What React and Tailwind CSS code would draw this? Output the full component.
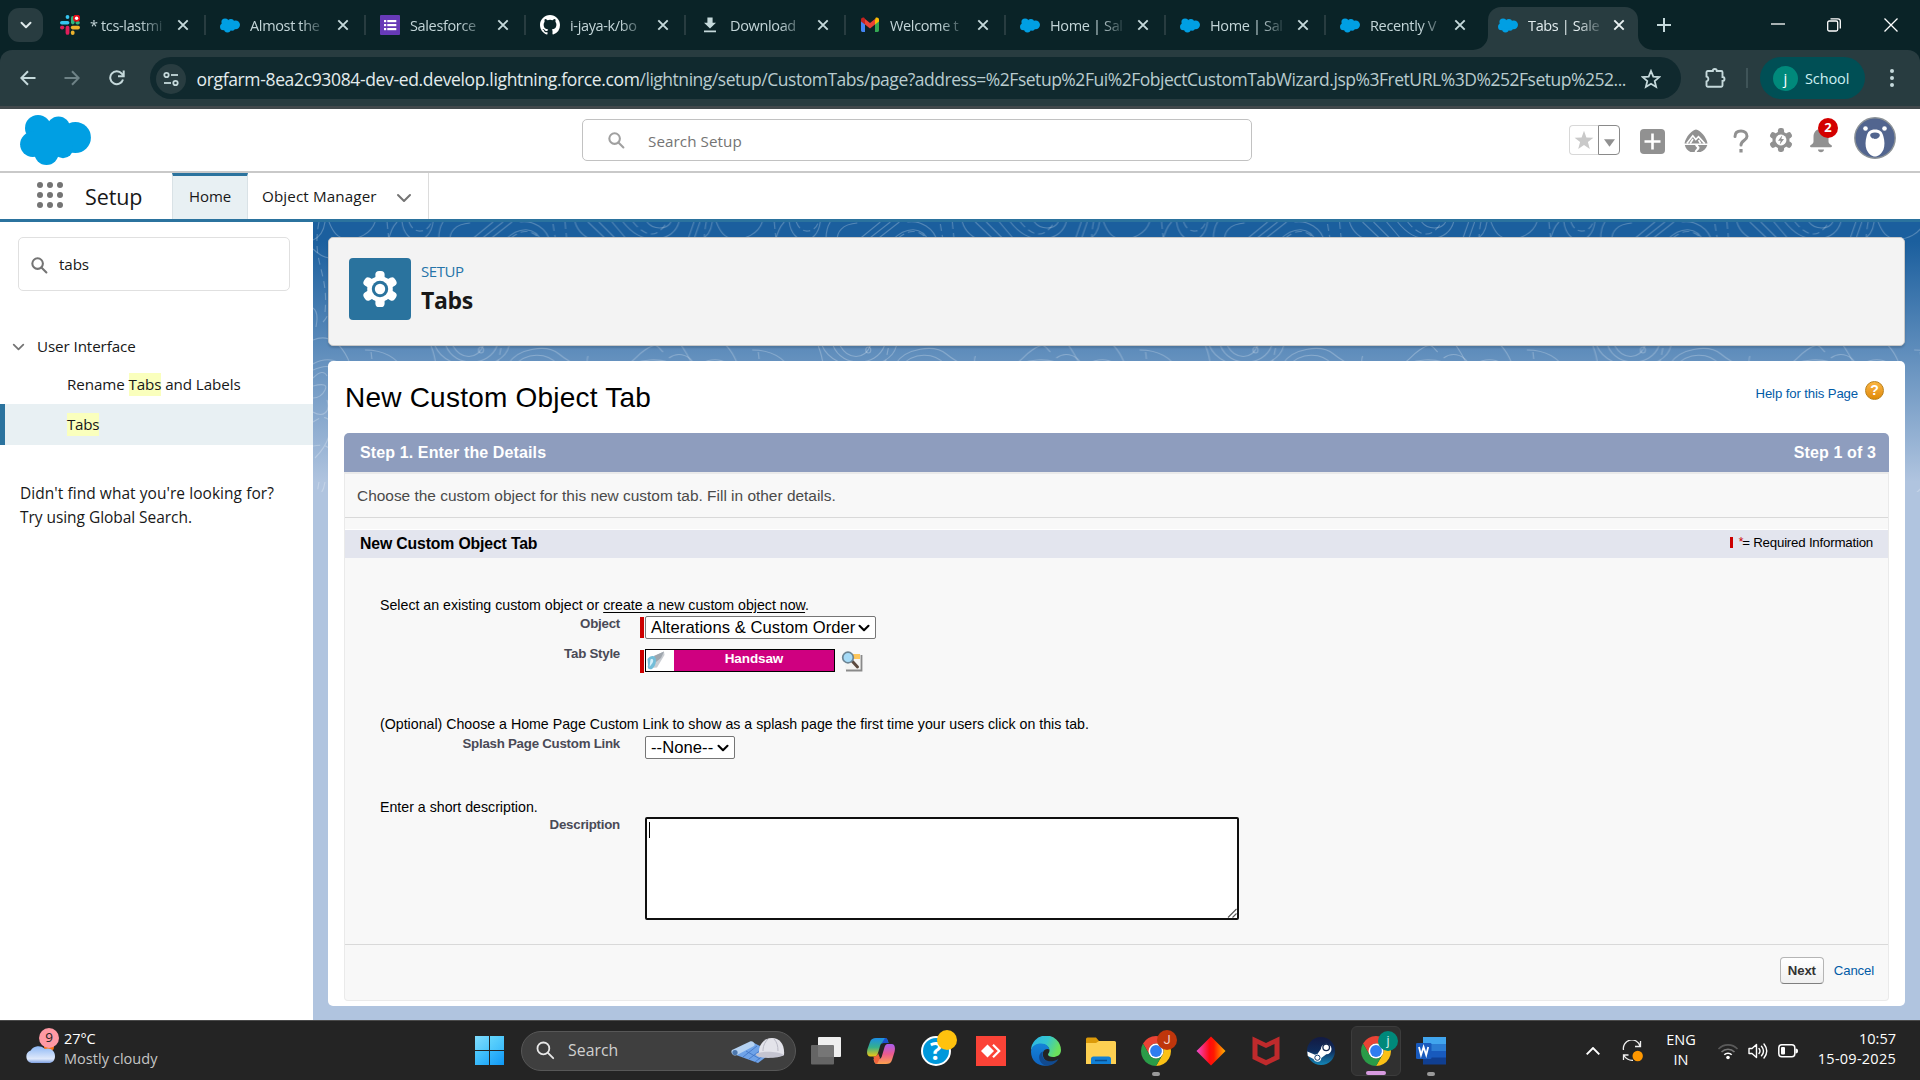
import React from "react";

const ui = "font-['Open_Sans','Noto_Sans',sans-serif]";
const arial = "font-['Liberation_Sans',Arial,sans-serif]";

/* ---------- Icons ---------- */

function Cloud({ className }) {
  return (
    <svg viewBox="20 115 71 50" className={className} fill="#009fe3">
      <circle cx="38" cy="128" r="13" />
      <circle cx="58.5" cy="128" r="11.5" />
      <circle cx="75.3" cy="137.5" r="15.6" />
      <circle cx="32.7" cy="144.3" r="12.6" />
      <circle cx="46.5" cy="152.8" r="12.2" />
      <circle cx="63" cy="148" r="10.2" />
      <rect x="34" y="128" width="34" height="22" />
    </svg>
  );
}

function Slack() {
  return (
    <svg viewBox="0 0 20 20" className="h-5 w-5">
      <rect x="5.6" y="0" width="3.8" height="4" rx="1.9" fill="#36c5f0" />
      <rect x="0" y="6" width="9.4" height="3.6" rx="1.8" fill="#36c5f0" />
      <rect x="11" y="1" width="3.6" height="8.4" rx="1.8" fill="#2eb67d" />
      <rect x="15.5" y="6" width="4.3" height="3.5" rx="1.7" fill="#2eb67d" />
      <rect x="10.8" y="10.8" width="9.2" height="3.6" rx="1.8" fill="#ecb22e" />
      <rect x="10.8" y="15.6" width="3.8" height="4.4" rx="1.9" fill="#ecb22e" />
      <rect x="0" y="10.8" width="4.3" height="3.6" rx="1.8" fill="#e01e5a" />
      <rect x="5.6" y="10.8" width="3.8" height="9" rx="1.9" fill="#e01e5a" />
      <circle cx="16.6" cy="3.2" r="3.6" fill="#e30b17" />
      <circle cx="16.6" cy="3.2" r="1.7" fill="#fff" />
    </svg>
  );
}

function Forms() {
  return (
    <svg viewBox="0 0 20 20" className="h-5 w-5">
      <rect width="20" height="20" rx="1" fill="#673ab7" />
      <g fill="#fff">
        <rect x="4" y="5" width="2.2" height="2.2" />
        <rect x="4" y="9" width="2.2" height="2.2" />
        <rect x="4" y="13" width="2.2" height="2.2" />
        <rect x="7.3" y="5" width="9" height="2.2" />
        <rect x="7.3" y="9" width="9" height="2.2" />
        <rect x="7.3" y="13" width="9" height="2.2" />
      </g>
    </svg>
  );
}

function Github() {
  return (
    <svg viewBox="0 0 16 16" className="h-5 w-5" fill="#fff">
      <path d="M8 0C3.58 0 0 3.58 0 8c0 3.54 2.29 6.53 5.47 7.59.4.07.55-.17.55-.38 0-.19-.01-.82-.01-1.49-2.01.37-2.53-.49-2.69-.94-.09-.23-.48-.94-.82-1.13-.28-.15-.68-.52-.01-.53.63-.01 1.08.58 1.23.82.72 1.21 1.87.87 2.33.66.07-.52.28-.87.51-1.07-1.78-.2-3.64-.89-3.64-3.95 0-.87.31-1.59.82-2.15-.08-.2-.36-1.02.08-2.12 0 0 .67-.21 2.2.82a7.6 7.6 0 0 1 4 0c1.53-1.04 2.2-.82 2.2-.82.44 1.1.16 1.92.08 2.12.51.56.82 1.27.82 2.15 0 3.07-1.87 3.75-3.65 3.95.29.25.54.73.54 1.48 0 1.07-.01 1.93-.01 2.2 0 .21.15.46.55.38A8.01 8.01 0 0 0 16 8c0-4.42-3.58-8-8-8z" />
    </svg>
  );
}

function DownloadGlyph() {
  return (
    <svg viewBox="0 0 20 20" className="h-5 w-5" fill="#c5d9db">
      <path d="M7.4 2.5h5.2v5.2h3.4L10 13.6 4 7.7h3.4zM4 15.4h12v1.9H4z" />
    </svg>
  );
}

function Gmail() {
  return (
    <svg viewBox="0 0 20 20" className="h-5 w-5">
      <path d="M1 4.5v11A1.5 1.5 0 0 0 2.4 17H5V8z" fill="#4285f4" />
      <path d="M19 4.5v11a1.5 1.5 0 0 1-1.4 1.5H15V8z" fill="#34a853" />
      <path d="M15 5v4.6l4-3V4.700c0-1.900-2.100-2.800-3.500-1.700z" fill="#fbbc04" />
      <path d="M5 9.6V4l5 3.900L15 4v5.600l-5 3.900z" fill="#ea4335" />
      <path d="M1 4.700v1.900l4 3V4l-.5-1C3.100 1.900 1 2.800 1 4.700z" fill="#c5221f" />
    </svg>
  );
}

function Close({ color }) {
  return (
    <svg viewBox="0 0 16 16" className="h-4 w-4 shrink-0" stroke={color} strokeWidth="1.9" fill="none">
      <path d="M3.3 3.3l9.400 9.400M12.700 3.300l-9.400 9.400" />
    </svg>
  );
}

function Magnifier({ className, color, w = 2.2 }) {
  return (
    <svg viewBox="0 0 18 18" className={className} fill="none" stroke={color} strokeWidth={w} strokeLinecap="round">
      <circle cx="7" cy="7" r="5.6" />
      <path d="M11.3 11.3L16.3 16.3" />
    </svg>
  );
}

function Gear({ className, color, hole, bolt }) {
  return (
    <svg viewBox="-18 -18 36 36" className={className} fill={color}>
      <circle r="12.8" />
      {[0, 60, 120, 180, 240, 300].map((a) => (
        <rect key={a} x="-4.6" y="-18" width="9.2" height="12" rx="3.6" transform={`rotate(${a})`} />
      ))}
      <circle r="8.2" fill={hole} />
      {bolt ? <path d="M2-7L-4.500 1H-.5L-2 7 4.500-1.500H.5z" /> : <circle r="5.2" />}
    </svg>
  );
}

function Chevron({ className, color, w = 2 }) {
  return (
    <svg viewBox="0 0 16 10" className={className} fill="none" stroke={color} strokeWidth={w} strokeLinecap="round" strokeLinejoin="round">
      <path d="M2 2l6 6 6-6" />
    </svg>
  );
}

function Chrome() {
  return (
    <svg viewBox="-15 -15 30 30" className="h-[30px] w-[30px]">
      <path d="M-12.990 -7.500A15 15 0 0 1 12.990 -7.500H0A7.500 7.500 0 0 0-6.500-3.750L-6.500 3.750z" fill="#ea4335" />
      <path d="M12.990-7.500A15 15 0 0 1 0 15L6.500 3.750A7.500 7.500 0 0 0 6.500-3.750L0-7.500z" fill="#fbc116" />
      <path d="M0 15A15 15 0 0 1-12.990-7.500L-6.500 3.750A7.500 7.500 0 0 0 6.500 3.750z" fill="#2a9c48" />
      <circle r="7.5" fill="#fff" />
      <circle r="5.9" fill="#2f7df0" />
    </svg>
  );
}

/* ---------- Browser ---------- */

const tabs = [
  { icon: <Slack />, title: "* tcs-lastmi" },
  { icon: <Cloud className="h-[15px] w-5" />, title: "Almost the" },
  { icon: <Forms />, title: "Salesforce" },
  { icon: <Github />, title: "i-jaya-k/bo" },
  { icon: <DownloadGlyph />, title: "Download" },
  { icon: <Gmail />, title: "Welcome t" },
  { icon: <Cloud className="h-[15px] w-5" />, title: "Home | Sal" },
  { icon: <Cloud className="h-[15px] w-5" />, title: "Home | Sal" },
  { icon: <Cloud className="h-[15px] w-5" />, title: "Recently V" },
];

const fade = "whitespace-nowrap pt-px text-[14.5px] tracking-[-0.35px] [mask-image:linear-gradient(to_right,black_68%,transparent_104%)]";

function TabStrip() {
  return (
    <div className="flex h-[50px] items-start bg-[#0a2327] pl-2">
      <div className="mt-2 mr-1 flex h-[34px] w-[35px] items-center justify-center rounded-[11px] bg-[#283c40]">
        <Chevron className="h-[8px] w-[12px]" color="#dfeaeb" w={2.6} />
      </div>
      {tabs.map((t, i) => (
        <div key={i} className={`flex h-[50px] shrink-0 items-center pl-[13px] ${i < 8 ? "w-[160px]" : "w-[146px]"}`}>
          <div className="flex w-5 shrink-0 justify-center">{t.icon}</div>
          <div className={`${fade} ml-[10px] w-[74px] shrink-0 text-[#c3d5d8]`}>{t.title}</div>
          <div className={i < 8 ? "ml-[11px]" : "ml-[8px]"}><Close color="#c5d9db" /></div>
          {i < 8 && <div className="ml-[13px] h-5 w-[2px] bg-[#283c40]" />}
        </div>
      ))}
      <div className="flex h-[50px] w-[180px] items-end">
        <svg viewBox="0 0 15 15" className="h-[15px] w-[15px] shrink-0"><path d="M0 15A15 15 0 0 0 15 0V15z" fill="#283c40" /></svg>
        <div className="flex h-[43px] w-[150px] shrink-0 items-center rounded-t-[13px] bg-[#283c40] pb-[7px] pl-[10px]">
          <Cloud className="h-[15px] w-5" />
          <div className={`${fade} ml-[10px] w-[74px] text-[#e2ecee]`}>Tabs | Sale</div>
          <div className="ml-[9px]"><Close color="#eaf2f3" /></div>
        </div>
        <svg viewBox="0 0 15 15" className="h-[15px] w-[15px] shrink-0"><path d="M15 15A15 15 0 0 1 0 0V15z" fill="#283c40" /></svg>
      </div>
      <svg viewBox="0 0 14 14" className="mt-[18px] ml-1 h-[14px] w-[14px]" stroke="#c5d9db" strokeWidth="2"><path d="M7 0v14M0 7h14" /></svg>
      <svg viewBox="0 0 14 14" className="mt-[17px] ml-[100px] h-[14px] w-[14px]" stroke="#fff" strokeWidth="1.3"><path d="M0 7h14" /></svg>
      <svg viewBox="0 0 14 14" className="mt-[18px] ml-[42px] h-[14px] w-[14px]" stroke="#fff" strokeWidth="1.3" fill="none">
        <rect x=".7" y="3" width="10" height="10" rx="1.5" />
        <path d="M3.500.8H11a2.300 2.300 0 0 1 2.300 2.300v7.500" />
      </svg>
      <svg viewBox="0 0 14 14" className="mt-[18px] ml-[43px] h-[14px] w-[14px]" stroke="#fff" strokeWidth="1.3"><path d="M.5.5l13 13M13.500.5L.5 13.500" /></svg>
    </div>
  );
}

function Toolbar() {
  return (
    <div className="bg-[#0a2327]">
      <div className="flex h-[59px] items-center rounded-t-[12px] border-b-[3px] border-[#42494c] bg-[#283c40]">
        <svg viewBox="0 0 16 16" className="ml-5 h-4 w-4" fill="none" stroke="#c5d9db" strokeWidth="2"><path d="M15.500 8H1.500M8 1.200L1.300 8 8 14.800" /></svg>
        <svg viewBox="0 0 16 16" className="ml-7 h-4 w-4" fill="none" stroke="#6e8286" strokeWidth="2"><path d="M.5 8h14M8 1.200L14.700 8 8 14.800" /></svg>
        <svg viewBox="0 0 16 16" className="ml-[29px] h-4 w-4" fill="none" stroke="#c5d9db" strokeWidth="2">
          <path d="M14 9.500A6.500 6.500 0 1 1 12.800 3.600L14.500 5.800" /><path d="M14.700.5v5.800H9" />
        </svg>
        <div className="ml-[25px] flex h-[42px] w-[1531px] items-center rounded-full bg-[#10292e] pt-px pl-[6px]">
          <div className="flex h-[30px] w-[30px] shrink-0 items-center justify-center rounded-full bg-[#283c40]">
            <svg viewBox="0 0 16 16" className="h-4 w-4" fill="none" stroke="#c5d9db" strokeWidth="1.8">
              <circle cx="3.5" cy="4" r="2.2" /><path d="M8 4h7" /><circle cx="12.5" cy="12" r="2.2" /><path d="M1 12h7" />
            </svg>
          </div>
          <div className="ml-[10.5px] w-[1430px] shrink-0 pt-[2px] text-[17.5px] tracking-[-0.475px] whitespace-nowrap text-[#b9cccf]">
            <span className="tracking-[-0.35px] text-[#e3eced]">orgfarm-8ea2c93084-dev-ed.develop.lightning.force.com</span>
            /lightning/setup/CustomTabs/page?address=%2Fsetup%2Fui%2FobjectCustomTabWizard.jsp%3FretURL%3D%252Fsetup%252...
          </div>
          <svg viewBox="0 0 20 20" className="ml-[14.500px] h-5 w-5 shrink-0" fill="none" stroke="#c5d9db" strokeWidth="1.8"><path d="M10 2l2.300 5.600 6 .5-4.600 3.900 1.400 5.900L10 14.700l-5.100 3.200 1.400-5.900L1.700 8.100l6-.5z" /></svg>
        </div>
        <svg viewBox="0 0 22 22" className="ml-[23px] h-[22px] w-[22px]" fill="none" stroke="#c5d9db" strokeWidth="1.9">
          <path d="M2.500 5.200a1.200 1.200 0 0 1 1.200-1.200H8.800a2 2 0 0 1 4 0h4.500a1.200 1.200 0 0 1 1.200 1.200v4.800a2 2 0 0 1 0 4v4.500a1.200 1.200 0 0 1-1.200 1.200H3.700a1.200 1.200 0 0 1-1.200-1.200v-4a2.600 2.600 0 0 0 0-5z" />
        </svg>
        <div className="ml-5 h-5 w-[2px] bg-[#3f5458]" />
        <div className="ml-3 flex h-[42px] w-[105px] items-center rounded-full bg-[#004f55] pl-[13px]">
          <div className="flex h-[25px] w-[25px] items-center justify-center rounded-full bg-[#00897b] text-[15px] text-white">j</div>
          <span className="ml-[7px] pt-[2px] text-[14.5px] tracking-[-0.1px] text-[#cdeff2]">School</span>
        </div>
        <div className="ml-[25px] flex flex-col gap-[3px]">
          <div className="h-1 w-1 rounded-full bg-[#c5d9db]" />
          <div className="h-1 w-1 rounded-full bg-[#c5d9db]" />
          <div className="h-1 w-1 rounded-full bg-[#c5d9db]" />
        </div>
      </div>
    </div>
  );
}

/* ---------- Salesforce header ---------- */

function GlobalHeader() {
  return (
    <div className="flex h-16 items-start border-b-2 border-[#c9c9c9] bg-white">
      <Cloud className="mt-[6px] ml-5 h-[50px] w-[71px]" />
      <div className="mt-[10px] ml-[491px] flex h-[42px] w-[670px] items-center rounded-[5px] border border-[#c2c2c2] pl-[25px]">
        <Magnifier className="h-[17px] w-[17px]" color="#a0a0a0" />
        <span className="ml-[23px] pt-[2px] text-[15.2px] tracking-[0.08px] text-[#747474]">Search Setup</span>
      </div>
      <div className="mt-4 ml-[317px] flex h-[30px] w-[51px]">
        <div className="flex w-[29px] items-center justify-center rounded-l-[4px] border border-r-0 border-[#d8d8d8]">
          <svg viewBox="0 0 20 20" className="h-5 w-5" fill="#c9c9c9"><path d="M10 .8l2.400 6.600 7 .3-5.500 4.400 1.900 6.800L10 15l-5.800 3.900 1.900-6.800L.6 7.700l7-.3z" /></svg>
        </div>
        <div className="flex w-[22px] items-center justify-center rounded-r-[4px] border border-[#8a8a8a]">
          <svg viewBox="0 0 12 8" className="mt-[6px] h-2 w-[11px]" fill="#909090"><path d="M0 0h12L6 8z" /></svg>
        </div>
      </div>
      <svg viewBox="0 0 25 25" className="mt-5 ml-5 h-[25px] w-[25px]">
        <rect width="25" height="25" rx="4" fill="#919191" /><path d="M12.500 4.500v16M4.500 12.500h16" stroke="#fff" strokeWidth="2.600" />
      </svg>
      <svg viewBox="0 0 24 24" className="mt-5 ml-[19px] h-6 w-6">
        <path d="M12 0.500C16 1 22.500 8 23.500 14.500H.5C1.500 8 8 1 12 .5z" fill="#919191" />
        <path d="M.8 16h10.400c.3 2.200 2.500 2 1.600 3.400-.7 1-2 1.600-2.100 3.600H6.500C3.500 21.500 1.500 19.500.8 16zM14 16h9.300c-1 3.800-3.800 6-6.800 7h-3.800c.2-1.500 3-2.500 2.800-4.500-.1-1.200-1.400-1.400-1.500-2.500z" fill="#919191" />
        <path d="M2.800 14.600L8.800 6.800l3 3.800 2.700-3L20.800 14.600M9 10l-2.800 4.500M14.600 11l2 3.500" stroke="#fff" strokeWidth="1.6" fill="none" />
      </svg>
      <svg viewBox="0 0 16 24" className="mt-5 ml-[25px] h-6 w-4" fill="none" stroke="#919191" strokeWidth="3">
        <path d="M2 7.500C2 3.500 4.500 2 8 2s6 2 6 5.200c0 4.300-6 4.300-6 8.800" strokeLinecap="round" /><path d="M8 20v3.500" strokeWidth="3.2" />
      </svg>
      <Gear className="mt-[19px] ml-5 h-6 w-6" color="#919191" hole="#fff" bolt />
      <div className="relative mt-5 ml-4 h-6 w-6">
        <svg viewBox="0 0 24 24" className="h-6 w-6" fill="#919191">
          <path d="M12 0c5 0 7.500 3.500 7.500 8v4.500c0 2 1.500 2.500 3 3.700.8.700.5 2-.6 2H2.100c-1.100 0-1.400-1.300-.6-2 1.500-1.200 3-1.700 3-3.700V8C4.500 3.500 7 0 12 0zM9 20.500h6c0 3.500-6 3.500-6 0z" />
        </svg>
        <div className="absolute top-[-11px] left-[9px] flex h-5 w-5 items-center justify-center rounded-full bg-[#d30000] text-[13px] font-bold text-white">2</div>
      </div>
      <svg viewBox="0 0 42 42" className="mt-2 ml-[21px] h-[42px] w-[42px]">
        <circle cx="21" cy="21" r="20.2" fill="#52658f" stroke="#8c9297" strokeWidth="1.4" />
        <circle cx="11.5" cy="11.5" r="2.3" fill="#fff" /><circle cx="30.500" cy="11.5" r="2.3" fill="#fff" />
        <path d="M21 12.500c5 0 7.300 2.200 8.300 6.500 1.500 5 1.500 10 .2 13.500C27.500 37 24 39.500 21 39.500s-6.500-2.500-8.500-7c-1.300-3.500-1.300-8.500.2-13.500 1-4.300 3.300-6.500 8.300-6.500z" fill="#fff" />
        <path d="M21 15.500c3 0 4.800 1 4.800 2.800S23.500 22 21 22s-4.800-1.900-4.800-3.700 1.800-2.800 4.800-2.800z" fill="#52658f" />
      </svg>
    </div>
  );
}

function NavBar() {
  return (
    <div className="flex h-[49px] border-b-[3px] border-[#2b739e] bg-white pl-[37px]">
      <div className="mt-[9px] grid h-[26px] w-[26px] grid-cols-3 gap-x-[4px] gap-y-[4px]">
        {Array.from({ length: 9 }).map((_, i) => (
          <div key={i} className="h-[6px] w-[6px] rounded-full bg-[#747474]" />
        ))}
      </div>
      <div className="flex w-[109px] items-center pt-[2px] pl-[22px] text-[21.500px] tracking-[-0.1px] text-[#181818]">Setup</div>
      <div className="flex w-[76px] items-center justify-center border-x border-t-[3px] border-x-[#d9e2e6] border-t-[#2b739e] bg-[#e8f0f3] pb-[2px] text-[15px] tracking-[-0.1px] text-[#181818]">Home</div>
      <div className="flex w-[181px] items-center border-r border-[#dcdcdc] pl-[14px] text-[15.2px] text-[#181818]">
        <span className="w-[134px] pt-px tracking-[0.12px] whitespace-nowrap">Object Manager</span>
        <Chevron className="mt-1 h-[10px] w-[16px]" color="#747474" w={2} />
      </div>
    </div>
  );
}

/* ---------- Sidebar ---------- */

function Sidebar() {
  return (
    <div className="flex w-[313px] shrink-0 flex-col bg-white text-[15.2px] tracking-[-0.1px] text-[#181818]">
      <div className="mt-[15px] ml-[18px] flex h-[54px] w-[272px] items-center rounded-[5px] border border-[#e0e0e0] pt-px pl-3">
        <Magnifier className="mt-[2px] h-[17px] w-[17px]" color="#747474" />
        <span className="ml-[11px]">tabs</span>
      </div>
      <div className="mt-[39px] flex h-8 items-center pl-3">
        <Chevron className="mt-[2px] h-[8px] w-[13px]" color="#747474" w={2.2} />
        <span className="ml-3">User Interface</span>
      </div>
      <div className="mt-[2px] flex h-10 items-center pt-px pl-[67px] whitespace-pre">
        Rename <span className="bg-[#faffbd]">Tabs</span> and Labels
      </div>
      <div className="mt-[0px] flex h-[41px] items-center border-l-[5px] border-[#2b739e] bg-[#e8f0f3] pl-[62px]">
        <span className="bg-[#faffbd] tracking-[-0.3px]">Tabs</span>
      </div>
      <div className="mt-9 ml-5 text-[15.5px] leading-6 whitespace-nowrap">
        <p className="tracking-[0.05px]">Didn't find what you're looking for?</p>
        <p className="tracking-[-0.05px]">Try using Global Search.</p>
      </div>
    </div>
  );
}

/* ---------- Contour background ---------- */

function Contours() {
  return (
    <svg className="absolute inset-0 h-[270px] w-full" fill="none">
      <defs>
        <pattern id="contours" width="387.3" height="260" patternUnits="userSpaceOnUse">
          <g stroke="#fff" strokeOpacity=".25" strokeWidth="1.1" fill="none">
            <path d="M0 18Q10 14 12 0M16 0C20 10 24 16 34 17S58 12 62 0M84 0C80 4 77 10 75 20M89 0C92 24 117 24 120 0M130 0Q125 8 126 20M157 1C142 2 136 10 137 20M158 18L180 0M167 18L190 0M176 18L199 0M192 18C206 4 222 4 229 20M207 0C220 -2 234 6 237 20M262 0Q266 14 284 20M275 0L296 20M286 0L306 20M299 0L316 20M310 0C318 10 328 18 345 17Q362 14 366 0M374 20L381 0M380 20L387 0M334 0C340 8 354 8 358 0" />
            <path strokeDasharray="7 4" d="M74 0L76 20M96 0Q100 10 108 9T118 0M240 2L243 20M252 0L254 20M198 16Q212 4 224 14M320 0Q340 24 354 0" />
            <path d="M0 27Q8 35 16 36M0 86Q6 90 3 105M0 118C14 112 30 118 40 150M52 128Q80 128 92 150M122 124C134 152 190 150 196 124M133 124C142 146 176 145 184 124M140 124C148 138 164 138 170 124M88 142C84 150 84 158 86 164M118 124C128 148 118 158 136 164M195 142C205 126 234 122 246 132S262 140 268 150M201 144C213 130 234 130 244 142S256 152 262 150M275 134C270 150 290 156 306 148S320 136 332 128 344 124 350 130M310 148C322 136 352 134 366 146M356 136C364 130 374 132 380 140S386 148 387.300 142M0 142C14 134 30 138 34 150" />
            <ellipse cx="168" cy="128" rx="2.5" ry="3" />
            <path d="M0 148Q22 138 24 156M0 156Q10 146 14 154M0 190C10 196 18 190 14 178M0 164Q16 160 12 168T0 176M2 236Q12 226 16 214" />
            <path strokeDasharray="7 5" d="M6 0C-2 40 16 50 12 90M10 100Q20 90 16 70M58 130L60 146M188 126L184 146M0 200Q14 190 18 202M0 224Q20 220 18 236" />
            <path d="M374 40Q380 36 387 30M368 58C372 46 384 44 387 46M372 64C384 58 387 74 376 82M366 100Q376 108 387 100M366 120C376 134 384 150 386 164S376 190 370 196M374 190C392 180 390 208 370 212" />
          </g>
        </pattern>
      </defs>
      <rect width="100%" height="270" fill="url(#contours)" />
    </svg>
  );
}

/* ---------- Setup content ---------- */

function PageHeader() {
  return (
    <div className="relative flex h-[109px] rounded-[5px] border border-[#c9c9c9] bg-[#f3f3f3] pt-5 pl-5 shadow-[0_2px_2px_rgba(0,0,0,0.15)]">
      <div className="flex h-[62px] w-[62px] items-center justify-center rounded-[4px] bg-[#2a739e]">
        <Gear className="h-9 w-9" color="#fff" hole="#2a739e" />
      </div>
      <div className="ml-[10px]">
        <div className="mt-[3px] h-5 text-[15px] leading-5 tracking-[-0.45px] text-[#2574a9]">SETUP</div>
        <div className="mt-[4px] text-[23px] leading-[30px] font-bold tracking-[-0.35px] text-[#181818]">Tabs</div>
      </div>
    </div>
  );
}

function Select({ children, className }) {
  return (
    <div className={`flex h-[23px] items-center rounded-[2px] border border-[#767676] bg-white pl-[5px] text-[16.6px] text-black ${className}`}>
      <span className="grow pt-px tracking-[0.06px] whitespace-nowrap">{children}</span>
      <Chevron className="mr-[5px] h-[8px] w-[12px]" color="#000" w={2.8} />
    </div>
  );
}

const label = "w-[240px] text-right text-[13.3px] font-bold leading-[16px] tracking-[-0.25px] text-[#4a4a56]";

function WizardBody() {
  return (
    <div className="flex h-[529px] flex-col rounded-b-[4px] border border-t-2 border-[#eaeaea] bg-[#f8f8f8] text-[14.2px] text-black">
      <div className="flex h-11 shrink-0 items-center border-b border-[#d9d9d9] pl-3 text-[15.45px] text-[#4a4a4a]">Choose the custom object for this new custom tab. Fill in other details.</div>
      <div className="mt-[11px] flex h-[29px] shrink-0 items-center justify-between border-t border-white bg-[#e3e5ee] pr-[15px] pb-px pl-[15px]">
        <span className="text-[15.8px] font-bold tracking-[-0.15px]">New Custom Object Tab</span>
        <span className="flex items-center pb-[2px] text-[13.3px] tracking-[-0.22px]">
          <span className="mr-[6px] h-[11px] w-[3px] bg-[#c00]" />
          <span className="mr-[-1px] pb-px text-[12px] text-[#c00]">*</span>= Required Information
        </span>
      </div>
      <div className="flex flex-col pl-[35px]">
        <p className="mt-[38px] h-[18px] leading-[18px]">Select an existing custom object or <span className="underline underline-offset-2">create a new custom object now</span>.</p>
        <div className="mt-[2px] flex">
          <div className={label}>Object</div>
          <div className="mt-[1px] ml-5 h-[21px] w-1 bg-[#c00]" />
          <Select className="ml-[1px] w-[231px]">Alterations &amp; Custom Order</Select>
        </div>
        <div className="mt-[7px] flex">
          <div className={label}>Tab Style</div>
          <div className="mt-[4px] ml-5 h-[23px] w-1 bg-[#c00]" />
          <div className="mt-[3px] ml-[1px] flex h-[23px] w-[190px] border border-black">
            <div className="w-[28px] bg-white">
              <svg viewBox="0 0 28 21" className="h-[21px] w-[28px]">
                <path d="M8 6L18 1.500 18.500 5 11 17.500 5 18z" fill="#c9cdd2" />
                <path d="M8 6L18 1.500 15 8 10 12z" fill="#9fa6ad" />
                <path d="M1.500 9C4 5.500 8 5 9.500 8S9 17 6 19C3 20 1 18.500 2 15z" fill="#73bdd8" />
                <path d="M4.500 9.500C7 8 8 10 6.500 13l-3 4z" fill="#d5f0fa" />
              </svg>
            </div>
            <div className="grow bg-[#cf0080] text-center text-[13.5px] leading-[17px] font-bold tracking-[-0.1px] text-white">Handsaw</div>
          </div>
          <svg viewBox="0 0 22 22" className="mt-[5px] ml-[6px] h-[22px] w-[22px]">
            <path d="M7 3h13v16H4v-8z" fill="#f4f4f2" /><path d="M5 19.500h15.500V4" stroke="#8a8a8a" strokeWidth="1.8" fill="none" />
            <rect x="11" y="3" width="8" height="5" fill="#fcc65c" />
            <path d="M11.500 10.500l5 5.500" stroke="#5b4a3f" strokeWidth="3" strokeLinecap="round" />
            <circle cx="7" cy="6.5" r="5.3" fill="#a6dbf7" stroke="#6c8493" strokeWidth="1.7" />
          </svg>
        </div>
        <p className="mt-[42px] h-[18px] leading-[18px]">(Optional) Choose a Home Page Custom Link to show as a splash page the first time your users click on this tab.</p>
        <div className="mt-[3px] flex">
          <div className={label}>Splash Page Custom Link</div>
          <Select className="ml-[25px] w-[90px]">--None--</Select>
        </div>
        <p className="mt-[39px] h-[18px] leading-[18px]">Enter a short description.</p>
        <div className="mt-[1px] flex">
          <div className={label}>Description</div>
          <div className="ml-[25px] flex h-[103px] w-[594px] items-end justify-between rounded-[2px] border-2 border-[#101010] bg-white">
            <div className="mb-[80px] ml-[2px] h-4 w-px bg-black" />
            <svg viewBox="0 0 10 10" className="h-[10px] w-[10px]" stroke="#555" strokeWidth="1.1"><path d="M1 9.500L9.500 1M5.500 9.500L9.500 5.500" /></svg>
          </div>
        </div>
      </div>
      <div className="mt-6 flex grow items-start justify-end border-t border-[#d9d9d9] pt-3 pr-[14px]">
        <div className="flex h-[27px] w-11 items-center justify-center rounded-[4px] border border-[#b5b5b5] border-b-[#7f7f7f] bg-gradient-to-b from-white to-[#f0f0f0] text-[13.2px] font-bold tracking-[-0.15px] text-[#333]">Next</div>
        <span className="mt-[6px] ml-[10px] text-[13.2px] leading-[15px] tracking-[-0.15px] text-[#015ba7]">Cancel</span>
      </div>
    </div>
  );
}

function WizardCard() {
  return (
    <div className="relative mt-[15px] flex h-[645px] flex-col rounded-[5px] bg-white px-4">
      <div className="flex h-[72px] items-center justify-between pr-[5px] pl-[1px]">
        <h1 className="pt-[2px] text-[28px] tracking-[0.22px] text-black">New Custom Object Tab</h1>
        <div className="mb-[12px] flex items-center">
          <span className="mt-[6px] text-[13.2px] tracking-[-0.13px] text-[#015ba7]">Help for this Page</span>
          <div className="ml-[7px] flex h-[19px] w-[19px] items-center justify-center rounded-full border border-[#b9801a] bg-gradient-to-b from-[#fbb540] to-[#e08a00] text-[14px] font-bold text-white">?</div>
        </div>
      </div>
      <div className="flex h-[39px] items-center justify-between rounded-t-[5px] bg-[#8e9dbe] pr-[13px] pl-4 text-[16px] font-bold tracking-[0.12px] text-white">
        <span>Step 1. Enter the Details</span>
        <span>Step 1 of 3</span>
      </div>
      <WizardBody />
    </div>
  );
}

/* ---------- Taskbar ---------- */

function Slot({ children, active, mark, badge, badgeClass }) {
  return (
    <div className={`relative flex h-[50px] w-[50px] items-center justify-center rounded-[6px] ${active ? "border border-[#3c3c3c] bg-[#303030]" : ""}`}>
      {children}
      {badgeClass && (
        <div className={`absolute top-[4px] left-[26px] flex h-5 w-5 items-center justify-center rounded-full text-[13px] leading-none ${badgeClass}`}>{badge}</div>
      )}
      {mark && <div className={`absolute bottom-0 h-1 rounded-full ${active ? "w-5 bg-[#d79be0]" : "w-2 bg-[#9a9a9a]"}`} />}
    </div>
  );
}

function Taskbar() {
  return (
    <div className="flex h-[60px] items-center border-t border-[#4a4a4a] bg-[#242424] text-[14.5px] text-white">
      <div className="relative ml-[25px] h-[30px] w-[30px]">
        <svg viewBox="0 0 30 30" className="h-[30px] w-[30px]">
          <defs>
            <linearGradient id="cl" x1="0" y1="0" x2="0" y2="1"><stop offset="0" stopColor="#8db8f5" /><stop offset=".75" stopColor="#dfe9fb" /><stop offset="1" stopColor="#7c9fe0" /></linearGradient>
          </defs>
          <circle cx="24" cy="11" r="5" fill="#f97316" />
          <path d="M6.500 27a6.500 6.500 0 0 1-.8-12.500A9 9 0 0 1 20 13c5-2 10 1.500 10 7.200 0 4-2.500 6.800-6.500 6.800z" fill="url(#cl)" />
        </svg>
        <div className="absolute top-[-8px] left-[14px] flex h-5 w-5 items-center justify-center rounded-full bg-[#ff99a4] text-[13.5px] leading-none text-[#222]">9</div>
      </div>
      <div className="ml-[9px] w-[311px] pb-[3px] leading-5">
        <div className="tracking-[-0.1px]">27°C</div>
        <div className="tracking-[0.05px] text-[#c6c6c6]">Mostly cloudy</div>
      </div>
      <div className="mr-[17px] ml-[100px] grid h-[29px] w-[29px] grid-cols-2 gap-[1px]">
        <div className="bg-gradient-to-br from-[#7fdcfd] to-[#4cc6fb]" />
        <div className="bg-gradient-to-br from-[#63d6fc] to-[#3bbcfb]" />
        <div className="bg-gradient-to-br from-[#4fcafc] to-[#1fa8f9]" />
        <div className="bg-gradient-to-br from-[#37b9fb] to-[#0d98f5]" />
      </div>
      <div className="flex h-10 w-[275px] items-center rounded-full border border-[#575757] bg-[#3f3f3f] pl-[14px]">
        <Magnifier className="h-[19px] w-[19px]" color="#e8e8e8" w={1.7} />
        <span className="ml-[13px] w-[163px] pt-px text-[15.8px] tracking-[0.05px] text-[#d0d0d0]">Search</span>
        <svg viewBox="0 0 54 26" className="h-[26px] w-[54px]">
          <path d="M5 17L23 5l12 6 0 8-8 6z" fill="#6fa3e8" />
          <path d="M12 19l14-11M18 21l13-10M24 24l9-7M15 13l14 8" stroke="#3f72c4" strokeWidth=".8" />
          <path d="M1 12L19 3.500c3-1 6 2.500 4 4.500L6 17c-4 2-7-3-5-5z" fill="#b5d2f2" />
          <circle cx="4" cy="14.5" r="2.6" fill="#4c77ad" />
          <path d="M28 16C27 7 33 0 41 0s13 7 12 17c-8 3-18 3-25-1z" fill="#e3e3ea" />
          <path d="M25 16c4-3 22-3 28 1-4 3-20 4-26 1.500-1.500-.6-2.500-1.500-2-2.500z" fill="#c4c4d0" />
          <path d="M37 1c-4 4-5 8-5 12M43 1c3 3 4 7 4 12" stroke="#b9b9c5" fill="none" />
        </svg>
      </div>
      <div className="ml-[5px] flex gap-[5px]">
        <Slot>
          <svg viewBox="0 0 30 28" className="h-7 w-[30px]"><rect x="7" y="0" width="23" height="20" rx="1" fill="#efefef" /><rect x="0" y="8" width="23" height="19.5" rx="1" fill="#6b6b6b" fillOpacity=".92" /></svg>
        </Slot>
        <Slot>
          <svg viewBox="0 0 28 26" className="h-[26px] w-[28px]">
            <defs>
              <linearGradient id="cp1" x1="0" y1="0" x2="0" y2="1"><stop offset="0" stopColor="#1c8ee6" /><stop offset=".5" stopColor="#35b08c" /><stop offset="1" stopColor="#f2c811" /></linearGradient>
              <linearGradient id="cp2" x1="0" y1="0" x2="0" y2="1"><stop offset="0" stopColor="#a95df0" /><stop offset=".5" stopColor="#ec5a8f" /><stop offset="1" stopColor="#fda24e" /></linearGradient>
            </defs>
            <path d="M9 0h9c2 0 3 2 3.500 5H17c-3 0-3.500 1-4.500 5L11 15c-1 3-2 3.500-4 3.500H3.500C0 18.500-.5 15 .5 11L3 4C4 1 6 0 9 0z" fill="url(#cp1)" />
            <path d="M18 0c2 0 3 2 3.500 5H17c-2 0-3.500 1-4 3z" fill="#1a4fd0" />
            <path d="M19 26h-9c-2 0-3-2-3.500-5H11c3 0 3.500-1 4.500-5L17 11c1-4 2-5 4-5h3.500C28 6 28.500 10 27.500 14L25 22c-1 3-3 4-6 4z" fill="url(#cp2)" />
            <path d="M10 26c-2 0-3-3-3.500-7.500 3 0 4-1 4.500-3.500l2 5z" fill="#f0643c" />
          </svg>
        </Slot>
        <Slot badgeClass="bg-[#ffc20e]" badge="">
          <div className="flex h-[30px] w-[30px] items-center justify-center rounded-full border-2 border-white bg-[#0098db] text-[25px] leading-none font-bold text-white">?</div>
        </Slot>
        <Slot>
          <svg viewBox="0 0 30 30" className="h-[30px] w-[30px]"><rect width="30" height="30" fill="#fb4337" /><path d="M5 15l6.500-6.500L18 15l-6.500 6.500z" fill="#fff" /><path d="M17 8.800L23.200 15 17 21.200" stroke="#fff" strokeWidth="2.2" fill="none" /></svg>
        </Slot>
        <Slot>
          <svg viewBox="0 0 30 30" className="h-[30px] w-[30px]">
            <defs>
              <linearGradient id="eg1" x1="0" y1="0" x2="1" y2=".35"><stop offset="0" stopColor="#2bb4e8" /><stop offset=".55" stopColor="#34c6d0" /><stop offset="1" stopColor="#6be05c" /></linearGradient>
              <linearGradient id="eg2" x1="0" y1="0" x2="0" y2="1"><stop offset="0" stopColor="#1484d8" /><stop offset="1" stopColor="#0f63bf" /></linearGradient>
            </defs>
            <path d="M0 15A15 15 0 0 1 30 14c0 5-4 7-8 7-3 0-5-1-5-2.500 0-1 1.500-1.500 1.500-4C18.500 11 15 8 10 8 5 8 1 11 0 15z" fill="url(#eg1)" />
            <path d="M0 15.500C.5 10 5 7.500 10 7.500c5.500 0 8.500 3.500 8.500 7 0-2-5-2.500-6.500 2-1.500 6 5 11.500 11 10.500C14 33 0 29 0 15.500z" fill="url(#eg2)" />
            <path d="M12 15.500c-3 8 6 13 15.500 7.500-5 8-15 9-18.500 2-2-4-.5-8.500 3-9.500z" fill="#114a8f" />
          </svg>
        </Slot>
        <Slot>
          <svg viewBox="0 0 30 28" className="h-7 w-[30px]">
            <path d="M0 2a1.500 1.500 0 0 1 1.500-1.500H10L13 4H24v8H0z" fill="#dc9a09" />
            <path d="M0 6h10l3-2h15.500A1.500 1.500 0 0 1 30 5.500V27H0z" fill="#fdd052" />
            <path d="M5 27v-5a2.500 2.500 0 0 1 2.500-2.500h15A2.500 2.500 0 0 1 25 22v5z" fill="#1180d6" /><path d="M9 23.500h12" stroke="#0a4c8c" strokeWidth="1.5" />
          </svg>
        </Slot>
        <Slot mark badge="J" badgeClass="bg-[#bf360c] text-[#f3cfc4] font-['Roboto',sans-serif]"><Chrome /></Slot>
        <Slot>
          <svg viewBox="0 0 30 30" className="h-[30px] w-[30px]">
            <defs><linearGradient id="dm"><stop offset="0" stopColor="#f04bd0" /><stop offset=".45" stopColor="#ff0a10" /><stop offset=".6" stopColor="#ff1a00" /><stop offset="1" stopColor="#ffb400" /></linearGradient></defs>
            <path d="M15 0.500L29.500 15 15 29.500.5 15z" fill="url(#dm)" />
          </svg>
        </Slot>
        <Slot>
          <svg viewBox="0 0 28 30" className="h-[30px] w-7"><path d="M.5.5L14 7 27.500.5V23L14 29.500.5 23zM5.500 8v12L14 24l8.500-4V8L14 12z" fill="#bf2a2c" /></svg>
        </Slot>
        <Slot>
          <svg viewBox="0 0 28 28" className="h-7 w-7">
            <defs><linearGradient id="st" x1="0" y1="0" x2="0" y2="1"><stop offset="0" stopColor="#131a42" /><stop offset=".5" stopColor="#0f2c5c" /><stop offset="1" stopColor="#1387b8" /></linearGradient></defs>
            <circle cx="14" cy="14" r="14" fill="url(#st)" />
            <path d="M.3 14.500L8 17.700c.7-.5 1.500-.7 2.400-.7l3.500-5a5.300 5.300 0 1 1 5.400 5.300l-5 3.600A4 4 0 0 1 6.500 22L.8 19z" fill="#fff" />
            <circle cx="19.2" cy="10.3" r="3.3" fill="#fff" stroke="#14284f" strokeWidth="1.3" />
            <circle cx="10.4" cy="20.7" r="2.6" fill="none" stroke="#14406f" strokeWidth="1" />
          </svg>
        </Slot>
        <Slot active mark badge="j" badgeClass="bg-[#00897b] text-[#cfe9e6] font-['Roboto',sans-serif]"><Chrome /></Slot>
        <Slot mark>
          <svg viewBox="0 0 30 28" className="h-7 w-[30px]">
            <rect x="7" y="0" width="23" height="7.5" fill="#41a5ee" /><rect x="7" y="7" width="23" height="7.5" fill="#2b7cd3" /><rect x="7" y="14" width="23" height="7" fill="#185abd" /><rect x="7" y="20.5" width="23" height="7" fill="#103f91" />
            <rect x="0" y="6" width="15.5" height="16" rx="1.3" fill="#185abd" />
            <path d="M3 10l2 8 2.600-8 2.600 8 2-8" stroke="#fff" strokeWidth="1.8" fill="none" />
          </svg>
        </Slot>
      </div>
      <svg viewBox="0 0 14 8" className="ml-[130px] h-2 w-[14px]" fill="none" stroke="#fff" strokeWidth="1.9"><path d="M.7 7.300L7 1l6.300 6.300" /></svg>
      <svg viewBox="0 0 22 22" className="ml-[22px] h-[22px] w-[22px]" fill="none" stroke="#eee" strokeWidth="1.3">
        <path d="M1.500 10A8.500 8.500 0 0 1 18 6M18.500 1v5.500H13" /><path d="M1.500 20v-5h5M2 15.500C4 19 7 20.500 11 20.300" />
        <circle cx="15.7" cy="16" r="5.2" fill="#ff9800" stroke="none" />
      </svg>
      <div className="ml-[17px] w-[40px] pb-[2px] text-center leading-5"><div>ENG</div><div>IN</div></div>
      <svg viewBox="0 0 22 18" className="ml-[16px] h-[18px] w-[22px]" fill="none" strokeWidth="1.6">
        <path d="M1.500 7a13 13 0 0 1 19 0" stroke="#5a5a5a" /><path d="M4.500 10a9 9 0 0 1 13 0" stroke="#777" /><path d="M7.300 12.800a5.200 5.200 0 0 1 7.400 0" stroke="#fff" /><circle cx="11" cy="15.5" r="1.8" fill="#fff" />
      </svg>
      <svg viewBox="0 0 20 18" className="ml-[9px] h-[18px] w-5" fill="none" stroke="#fff" strokeWidth="1.4" strokeLinejoin="round">
        <path d="M1 6.500h3L8.500 2.500v13L4 11.500H1z" /><path d="M11 6.500q2 2.500 0 5M13.500 4.200q4 4.800 0 9.600M16 2q5.500 7 0 14" strokeLinecap="round" />
      </svg>
      <svg viewBox="0 0 20 14" className="ml-[10px] h-[14px] w-5"><rect x=".8" y=".8" width="16" height="12" rx="3" fill="none" stroke="#fff" strokeWidth="1.5" /><rect x="3" y="3" width="4" height="7.6" rx="1" fill="#fff" /><path d="M17.500 4.500c2 0 2.500 1 2.500 2.500s-.5 2.500-2.500 2.500z" fill="#fff" /></svg>
      <div className="ml-[17px] w-[81px] pb-[3px] text-right leading-5 whitespace-nowrap"><div>10:57</div><div className="tracking-[0.25px]">15-09-2025</div></div>
    </div>
  );
}

export default function App() {
  return (
    <div className={`${ui} flex h-[1080px] w-[1920px] flex-col overflow-hidden bg-white`}>
      <TabStrip />
      <Toolbar />
      <GlobalHeader />
      <NavBar />
      <div className="flex grow">
        <Sidebar />
        <div className="relative w-[1607px] bg-[linear-gradient(to_bottom,#1b5f9e_0px,#1b5f9e_20px,#b0c4df_260px)] px-[15px] pt-[15px]">
          <Contours />
          <PageHeader />
          <div className={arial}><WizardCard /></div>
        </div>
      </div>
      <Taskbar />
    </div>
  );
}
